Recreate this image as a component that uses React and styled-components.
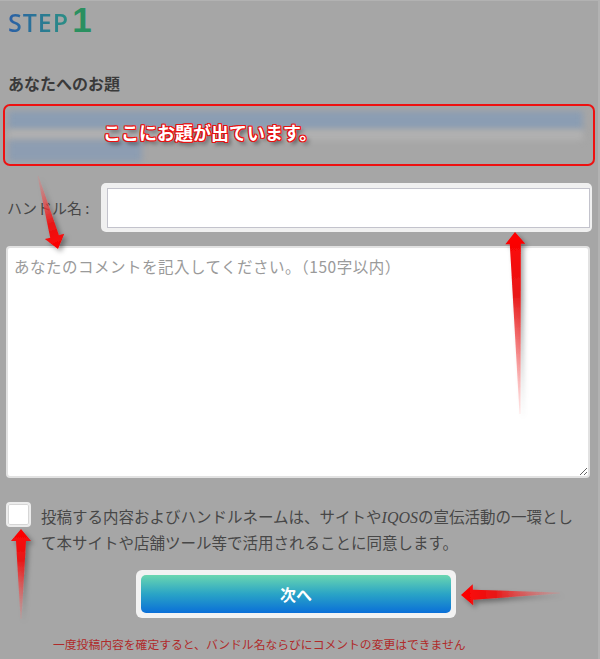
import React from "react";
import styled, { createGlobalStyle } from "styled-components";

const GlobalStyle = createGlobalStyle`
  * { box-sizing: border-box; }
  body {
    margin: 0;
    background: #a6a6a6;
    font-family: "Noto Sans CJK JP", "Noto Sans", sans-serif;
  }
`;

// ページ全体
const Page = styled.div`
  position: relative;
  width: 600px;
  height: 659px;
  overflow: hidden;
  padding: 0 10px 0 6px;
  background: #a6a6a6;
  border-top: 1px solid #b2b2b2;
  border-right: 2px solid #b2b2b2;
`;

const Logo = styled.div`
  display: flex;
  align-items: baseline;
  height: 38px;
  padding-left: 2px;
`;

const LogoWord = styled.span`
  font-family: "Open Sans", "Noto Sans", sans-serif;
  font-size: 25px;
  font-weight: 600;
  line-height: 38px;
  letter-spacing: 1px;
  background: linear-gradient(90deg, #2a5fa6, #2a8f84);
  -webkit-background-clip: text;
  background-clip: text;
  color: transparent;
`;

const LogoNum = styled.span`
  font-family: "Liberation Sans", Arial, sans-serif;
  font-size: 35px;
  font-weight: 700;
  line-height: 38px;
  margin-left: 3px;
  color: #2a9060;
`;

const Heading = styled.h2`
  margin: 33px 0 0 2px;
  font-size: 16px;
  font-weight: 700;
  line-height: 22px;
  color: #3a3a3a;
`;

// お題エリア（赤枠つき）
const TopicBox = styled.div`
  position: relative;
  margin: 10px -7px 0 -3px;
  height: 62px;
  border: 2px solid #ee1111;
  border-radius: 7px;
  padding: 5px 10px 0 3px;
  overflow: hidden;
`;

const BlurBand = styled.div`
  width: ${({ w }) => w};
  height: ${({ h }) => h}px;
  background: ${({ bg }) => bg};
  filter: blur(3px);
`;

const TopicNote = styled.span`
  position: absolute;
  left: 98px;
  top: 13px;
  font-size: 18px;
  font-weight: 700;
  color: #ffffff;
  text-shadow: 1px 0 0 #e81010, -1px 0 0 #e81010, 0 1px 0 #e81010,
    0 -1px 0 #e81010, 1px 1px 0 #e81010, -1px -1px 0 #e81010,
    1px -1px 0 #e81010, -1px 1px 0 #e81010, 3px 3px 4px rgba(0, 0, 0, 0.55);
`;

const HandleRow = styled.div`
  display: flex;
  align-items: center;
  margin-top: 17px;
`;

const Label = styled.label`
  width: 95px;
  padding-left: 1px;
  font-size: 15px;
  white-space: nowrap;
  color: #474747;
`;

const FieldFrame = styled.div`
  width: 491px;
  height: 49px;
  padding: 5px 2px 4px 6px;
  background: #f0f0f0;
  border-radius: 5px;
  margin-right: -7px;
`;

const TextInput = styled.input`
  display: block;
  width: 100%;
  height: 100%;
  border: 1px solid #c3c3cc;
  background: #ffffff;
  outline: none;
`;

const Comment = styled.textarea`
  display: block;
  width: 584px;
  height: 232px;
  margin-top: 14px;
  padding: 6px 6px;
  border: 2px solid #e2e2e2;
  border-radius: 4px;
  background: #ffffff;
  font-family: "Noto Sans CJK JP", sans-serif;
  font-size: 15.5px;
  letter-spacing: 0.5px;
  line-height: 24px;
  outline: none;

  &::placeholder {
    color: #9a9a9a;
  }
`;

const AgreeRow = styled.div`
  display: flex;
  align-items: flex-start;
  gap: 10px;
  margin-top: 24px;
`;

const CheckBox = styled.div`
  flex: none;
  width: 25px;
  height: 25px;
  background: #ffffff;
  border: 2px solid #ececec;
  border-radius: 4px;
  box-shadow: inset 0 0 0 1px #d6d6d6;
`;

const AgreeText = styled.p`
  margin: 2px 0 0;
  font-size: 15.5px;
  line-height: 25px;
  color: #474747;

  i {
    font-family: "Liberation Serif", serif;
    font-size: 16px;
  }
`;

const ButtonWrap = styled.div`
  display: flex;
  justify-content: center;
  margin-top: 15px;
  padding-right: 2px;
`;

const ButtonFrame = styled.div`
  width: 320px;
  height: 48px;
  padding: 5px;
  background: #f2f2f2;
  border-radius: 6px;
`;

const NextButton = styled.button`
  width: 100%;
  height: 100%;
  border: none;
  border-radius: 5px;
  background: linear-gradient(180deg, #6ad6b0 0%, #2aa4c6 50%, #0a6fd8 100%);
  color: #ffffff;
  font-family: "Noto Sans CJK JP", sans-serif;
  font-size: 16px;
  font-weight: 700;
  cursor: pointer;
`;

const Notice = styled.p`
  margin: 17px 0 0;
  padding-left: 47px;
  font-size: 11.8px;
  line-height: 18px;
  color: #b02a2a;
`;

// 注釈の矢印レイヤー
const Overlay = styled.svg`
  position: absolute;
  left: 0;
  top: 0;
  pointer-events: none;
`;

const arrowPoints = (tip, tail, headLen, headW, shaftW, tailW) => {
  const dx = tail[0] - tip[0];
  const dy = tail[1] - tip[1];
  const len = Math.hypot(dx, dy);
  const ux = dx / len;
  const uy = dy / len;
  const nx = -uy;
  const ny = ux;
  const bx = tip[0] + ux * headLen;
  const by = tip[1] + uy * headLen;
  const p = (x, y, s) => `${x + nx * s},${y + ny * s}`;
  return [
    `${tip[0]},${tip[1]}`,
    p(bx, by, headW / 2),
    p(bx, by, shaftW / 2),
    p(tail[0], tail[1], tailW / 2),
    p(tail[0], tail[1], -tailW / 2),
    p(bx, by, -shaftW / 2),
    p(bx, by, -headW / 2),
  ].join(" ");
};

const arrows = [
  { id: "a1", tip: [58, 248], tail: [38, 175], head: 13, hw: 20, sw: 9, tw: 1 },
  { id: "a2", tip: [515, 231], tail: [520, 413], head: 12, hw: 20, sw: 11, tw: 1 },
  { id: "a3", tip: [21, 528], tail: [21, 618], head: 12, hw: 20, sw: 10, tw: 1 },
  { id: "a4", tip: [461, 594], tail: [560, 592], head: 12, hw: 21, sw: 10, tw: 1 },
];

const Arrows = () => (
  <Overlay width="600" height="659" viewBox="0 0 600 659">
    <defs>
      <filter id="shadow" x="-50%" y="-50%" width="200%" height="200%">
        <feDropShadow dx="3" dy="3" stdDeviation="2.5" floodColor="#000" floodOpacity="0.35" />
      </filter>
      {arrows.map((a) => (
        <linearGradient
          key={a.id}
          id={`g-${a.id}`}
          gradientUnits="userSpaceOnUse"
          x1={a.tip[0]}
          y1={a.tip[1]}
          x2={a.tail[0]}
          y2={a.tail[1]}
        >
          <stop offset="0" stopColor="#ff0000" />
          <stop offset="0.35" stopColor="#e81818" />
          <stop offset="1" stopColor="#ff6a6a" stopOpacity="0.15" />
        </linearGradient>
      ))}
    </defs>
    {arrows.map((a) => (
      <polygon
        key={a.id}
        points={arrowPoints(a.tip, a.tail, a.head, a.hw, a.sw, a.tw)}
        fill={`url(#g-${a.id})`}
        filter="url(#shadow)"
      />
    ))}
  </Overlay>
);

const App = () => {
  return (
    <>
      <GlobalStyle />
      <Page>
        <Logo>
          <LogoWord>STEP</LogoWord>
          <LogoNum>1</LogoNum>
        </Logo>
        <Heading>あなたへのお題</Heading>
        <TopicBox>
          <BlurBand w="100%" h={19} bg="#8b9db3" />
          <BlurBand w="100%" h={10} bg="#b2b2b2" />
          <BlurBand w="134px" h={22} bg="#8d9db2" />
          <TopicNote>ここにお題が出ています。</TopicNote>
        </TopicBox>
        <HandleRow>
          <Label>ハンドル名 :</Label>
          <FieldFrame>
            <TextInput type="text" />
          </FieldFrame>
        </HandleRow>
        <Comment placeholder="あなたのコメントを記入してください。（150字以内）" />
        <AgreeRow>
          <CheckBox />
          <AgreeText>
            投稿する内容およびハンドルネームは、サイトや<i>IQOS</i>の宣伝活動の一環とし
            <br />
            て本サイトや店舗ツール等で活用されることに同意します。
          </AgreeText>
        </AgreeRow>
        <ButtonWrap>
          <ButtonFrame>
            <NextButton type="button">次へ</NextButton>
          </ButtonFrame>
        </ButtonWrap>
        <Notice>一度投稿内容を確定すると、バンドル名ならびにコメントの変更はできません</Notice>
        <Arrows />
      </Page>
    </>
  );
};

export default App;
